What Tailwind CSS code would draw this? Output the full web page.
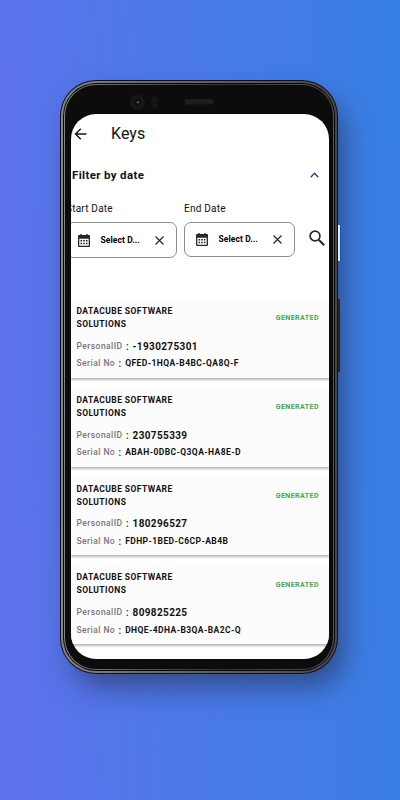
<!DOCTYPE html>
<html lang="en"><head><meta charset="utf-8"><title>Keys</title>
<script src="https://cdn.jsdelivr.net/npm/@tailwindcss/browser@4"></script></head>
<body class="w-[400px] h-[800px] overflow-hidden bg-[linear-gradient(88deg,#5e71ea_0%,#4d78e8_40%,#437ce7_70%,#377fe2_100%)] font-['Roboto','Liberation_Sans',sans-serif] text-[#111]">
<div class="pt-[80px] pl-[60px]">
<div class="relative w-[278px] h-[594px]">
  <div class="relative w-full h-full rounded-[36px] bg-[#111] p-px shadow-[9px_16px_28px_-3px_rgba(35,45,80,0.6)]">
  <div class="w-full h-full rounded-[35px] bg-[linear-gradient(90deg,#858585_0%,#6e6c6a_30%,#5c5855_70%,#484848_100%)] p-[2px]">
  <div class="w-full h-full rounded-[33px] bg-[#080808] p-px">
  <div class="w-full h-full rounded-[32px] bg-[linear-gradient(90deg,#858585_0%,#555_30%,#333_60%,#555_100%)] p-px">
  <div class="w-full h-full rounded-[31px] bg-[#0c0c0c] pl-[5.5px] pr-[4.5px] pt-[29px] pb-[10.5px] flex flex-col">
    <div class="w-full grow rounded-[25px] bg-white overflow-hidden">
      <header class="flex items-center h-[40px] pl-[3px]">
        <svg class="w-[13px] h-[12px]" viewBox="0 0 13 12" fill="none" stroke="#151515" stroke-width="1.4"><path d="M12.4 6H1.8M6.8 .8 1.5 6l5.3 5.2"/></svg>
        <h1 class="ml-[24.5px] text-[16px] leading-[20px] tracking-[.05px]">Keys</h1>
      </header>
      <div class="flex items-center justify-between h-[42px] pl-[1.5px] pr-[10px]">
        <h2 class="pt-px text-[11.5px] font-bold tracking-[.35px]">Filter by date</h2>
        <svg class="w-[9px] h-[6px]" viewBox="0 0 9 6" fill="none" stroke="#3c2f91" stroke-width="1.3"><path d="M.7 5.2 4.5 1.3l3.8 3.9"/></svg>
      </div>
      <div class="flex pt-[4px] h-[104px]">
        <div class="w-[111px] -ml-[4.5px] shrink-0">
          <div class="h-[17px] leading-[17px] text-[10px] tracking-[.22px]">Start Date</div>
          <div class="mt-[5px] h-[36px] border border-[#8c8c8c] rounded-[7px] flex items-center pl-[10.5px] pr-[12px]">
            <svg class="w-[12px] h-[13px]" viewBox="0 0 12 13"><path fill="#292630" fill-rule="evenodd" d="M1 1h1.3V0h1.4v1h4.6V0h1.4v1H11q1 0 1 1v10q0 1-1 1H1q-1 0-1-1V2q0-1 1-1zm.3 3.8v6.9h9.4V4.8z"/><path d="M2.5 6.8h7M2.5 9.5h7" stroke="#292630" stroke-width="1.5" stroke-dasharray="1.6 1.1"/></svg>
            <span class="ml-[11px] text-[8.5px] font-bold tracking-[.08px] text-black">Select D...</span>
            <svg class="ml-auto w-[9px] h-[9px]" viewBox="0 0 9 9" stroke="#222" stroke-width="1.1"><path d="m.5.5 8 8M8.5.5l-8 8"/></svg>
          </div>
        </div>
        <div class="w-[111px] ml-[7px] shrink-0">
          <div class="h-[17px] leading-[17px] text-[10px] tracking-[.22px]">End Date</div>
          <div class="mt-[5px] h-[35px] border border-[#8c8c8c] rounded-[7px] flex items-center pl-[10.5px] pr-[12px]">
            <svg class="w-[12px] h-[13px]" viewBox="0 0 12 13"><path fill="#292630" fill-rule="evenodd" d="M1 1h1.3V0h1.4v1h4.6V0h1.4v1H11q1 0 1 1v10q0 1-1 1H1q-1 0-1-1V2q0-1 1-1zm.3 3.8v6.9h9.4V4.8z"/><path d="M2.5 6.8h7M2.5 9.5h7" stroke="#292630" stroke-width="1.5" stroke-dasharray="1.6 1.1"/></svg>
            <span class="ml-[11px] text-[8.5px] font-bold tracking-[.08px] text-black">Select D...</span>
            <svg class="ml-auto w-[9px] h-[9px]" viewBox="0 0 9 9" stroke="#222" stroke-width="1.1"><path d="m.5.5 8 8M8.5.5l-8 8"/></svg>
          </div>
        </div>
        <svg class="ml-[14px] mt-[30px] w-[16px] h-[16px] shrink-0" viewBox="0 0 16 16" fill="none" stroke="#292630"><circle cx="6" cy="6" r="4.9" stroke-width="1.7"/><path d="m9.7 9.7 5.5 5.5" stroke-width="2.1"/></svg>
      </div>
      <main class="flex flex-col gap-[11px]">
        <article class="h-[77.75px] shrink-0 bg-[#fcfcfc] shadow-[0_2px_2px_rgba(0,0,0,0.28)] pl-[6px] pr-[9.5px] pt-[5px]">
          <div class="flex justify-between items-center h-[26px]"><h3 class="w-[120px] text-[8.5px] leading-[13px] font-bold tracking-[.42px]">DATACUBE SOFTWARE SOLUTIONS</h3><span class="pt-px text-[7px] font-bold tracking-[.46px] text-[#43a84a]">GENERATED</span></div>
          <p class="mt-[6.5px] h-[17.5px] flex items-center text-[8.5px] font-medium tracking-[.45px] text-[#777]">PersonalID<span class="w-[10px] text-center text-[10px] text-[#222]">:</span><b class="text-[10px] font-bold tracking-[.36px] text-[#111]">-1930275301</b></p>
          <p class="h-[17.5px] flex items-center text-[8.5px] font-medium tracking-[.45px] text-[#777]">Serial No<span class="w-[10px] text-center text-[10px] text-[#222]">:</span><b class="text-[8.5px] font-bold tracking-[.42px] text-[#111]">QFED-1HQA-B4BC-QA8Q-F</b></p>
        </article>
        <article class="h-[77.75px] shrink-0 bg-[#fcfcfc] shadow-[0_2px_2px_rgba(0,0,0,0.28)] pl-[6px] pr-[9.5px] pt-[5px]">
          <div class="flex justify-between items-center h-[26px]"><h3 class="w-[120px] text-[8.5px] leading-[13px] font-bold tracking-[.42px]">DATACUBE SOFTWARE SOLUTIONS</h3><span class="pt-px text-[7px] font-bold tracking-[.46px] text-[#43a84a]">GENERATED</span></div>
          <p class="mt-[6.5px] h-[17.5px] flex items-center text-[8.5px] font-medium tracking-[.45px] text-[#777]">PersonalID<span class="w-[10px] text-center text-[10px] text-[#222]">:</span><b class="text-[10px] font-bold tracking-[.36px] text-[#111]">230755339</b></p>
          <p class="h-[17.5px] flex items-center text-[8.5px] font-medium tracking-[.45px] text-[#777]">Serial No<span class="w-[10px] text-center text-[10px] text-[#222]">:</span><b class="text-[8.5px] font-bold tracking-[.42px] text-[#111]">ABAH-0DBC-Q3QA-HA8E-D</b></p>
        </article>
        <article class="h-[77.75px] shrink-0 bg-[#fcfcfc] shadow-[0_2px_2px_rgba(0,0,0,0.28)] pl-[6px] pr-[9.5px] pt-[5px]">
          <div class="flex justify-between items-center h-[26px]"><h3 class="w-[120px] text-[8.5px] leading-[13px] font-bold tracking-[.42px]">DATACUBE SOFTWARE SOLUTIONS</h3><span class="pt-px text-[7px] font-bold tracking-[.46px] text-[#43a84a]">GENERATED</span></div>
          <p class="mt-[6.5px] h-[17.5px] flex items-center text-[8.5px] font-medium tracking-[.45px] text-[#777]">PersonalID<span class="w-[10px] text-center text-[10px] text-[#222]">:</span><b class="text-[10px] font-bold tracking-[.36px] text-[#111]">180296527</b></p>
          <p class="h-[17.5px] flex items-center text-[8.5px] font-medium tracking-[.45px] text-[#777]">Serial No<span class="w-[10px] text-center text-[10px] text-[#222]">:</span><b class="text-[8.5px] font-bold tracking-[.42px] text-[#111]">FDHP-1BED-C6CP-AB4B</b></p>
        </article>
        <article class="h-[77.75px] shrink-0 bg-[#fcfcfc] shadow-[0_2px_2px_rgba(0,0,0,0.28)] pl-[6px] pr-[9.5px] pt-[5px]">
          <div class="flex justify-between items-center h-[26px]"><h3 class="w-[120px] text-[8.5px] leading-[13px] font-bold tracking-[.42px]">DATACUBE SOFTWARE SOLUTIONS</h3><span class="pt-px text-[7px] font-bold tracking-[.46px] text-[#43a84a]">GENERATED</span></div>
          <p class="mt-[6.5px] h-[17.5px] flex items-center text-[8.5px] font-medium tracking-[.45px] text-[#777]">PersonalID<span class="w-[10px] text-center text-[10px] text-[#222]">:</span><b class="text-[10px] font-bold tracking-[.36px] text-[#111]">809825225</b></p>
          <p class="h-[17.5px] flex items-center text-[8.5px] font-medium tracking-[.45px] text-[#777]">Serial No<span class="w-[10px] text-center text-[10px] text-[#222]">:</span><b class="text-[8.5px] font-bold tracking-[.42px] text-[#111]">DHQE-4DHA-B3QA-BA2C-Q</b></p>
        </article>
      </main>
    </div>
  </div></div></div></div>
  <svg class="absolute left-[68px] top-[13px] w-[90px] h-[20px]" viewBox="0 0 90 20"><circle cx="9.5" cy="9.5" r="7.5" fill="#171717"/><circle cx="9.5" cy="9.5" r="4" fill="#0c0c10" stroke="#222" stroke-width=".5"/><circle cx="10" cy="9.3" r="1.2" fill="#555968"/><rect x="23" y="2.5" width="7" height="14" rx="3.5" fill="#121212"/><circle cx="26.5" cy="6.5" r="2" fill="#171717"/><circle cx="26.5" cy="12.5" r="2" fill="#171717"/><rect x="56.5" y="6" width="29.5" height="5.5" rx="2.7" fill="#1d1d1d"/></svg>
  <div class="absolute left-[278px] top-[145px] w-[3px] h-[36px] bg-[#e9eaed] border-r border-[#1554c8]"></div>
  <div class="absolute left-[278px] top-[219px] w-[2px] h-[73px] bg-[#262626] rounded-r-[1px]"></div>
  </div>
</div>
</body></html>
